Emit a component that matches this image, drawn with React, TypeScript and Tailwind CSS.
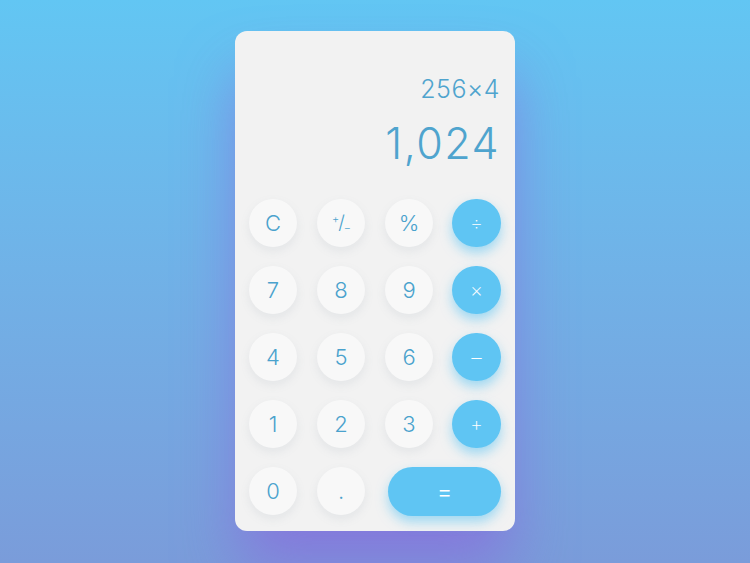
const keys: { label: string; kind: 'num' | 'op' | 'eq' }[] = [
  { label: 'C', kind: 'num' },
  { label: '⁺∕₋', kind: 'num' },
  { label: '%', kind: 'num' },
  { label: '÷', kind: 'op' },
  { label: '7', kind: 'num' },
  { label: '8', kind: 'num' },
  { label: '9', kind: 'num' },
  { label: '×', kind: 'op' },
  { label: '4', kind: 'num' },
  { label: '5', kind: 'num' },
  { label: '6', kind: 'num' },
  { label: '−', kind: 'op' },
  { label: '1', kind: 'num' },
  { label: '2', kind: 'num' },
  { label: '3', kind: 'num' },
  { label: '+', kind: 'op' },
  { label: '0', kind: 'num' },
  { label: '.', kind: 'num' },
  { label: '=', kind: 'eq' },
];

function Key({ label, kind }: { label: string; kind: 'num' | 'op' | 'eq' }) {
  if (kind === 'eq') {
    return (
      <button className="col-span-2 ml-[3px] h-[49px] rounded-full bg-[#5fc5f3] text-white text-[24px] font-light flex items-center justify-center shadow-[0_6px_12px_rgba(90,195,242,0.55)]">
        {label}
      </button>
    );
  }
  if (kind === 'op') {
    return (
      <button className="-ml-[1px] w-[49px] h-[48px] rounded-full bg-[#5fc5f3] text-white text-[20px] font-extralight flex items-center justify-center shadow-[0_6px_12px_rgba(90,195,242,0.55)]">
        {label === '−' ? <span className="text-[24px]">{label}</span> : label}
      </button>
    );
  }
  return (
    <button className="w-[48px] h-[48px] rounded-full bg-[#f8f8f8] text-[#4aa2cd] text-[22px] font-light flex items-center justify-center shadow-[0_4px_10px_rgba(120,140,160,0.12)]">
      {label === '⁺∕₋' ? (
        <span className="text-[19px] tracking-[-1px]">
          <sup className="text-[11px]">+</sup>/<sub className="text-[11px]">−</sub>
        </span>
      ) : (
        label
      )}
    </button>
  );
}

export default function App() {
  return (
    <div
      className="w-[750px] h-[563px] flex items-start justify-center pt-[31px] bg-gradient-to-b from-[#62c6f3] to-[#7a9cda] overflow-hidden"
      style={{ fontFamily: 'Inter, "Open Sans", sans-serif' }}
    >
      <div className="w-[280px] h-[500px] rounded-[12px] bg-[#f2f2f2] flex flex-col shadow-[0_40px_60px_-5px_rgba(140,100,220,0.65)]">
        {/* Display */}
        <div className="flex-1 flex flex-col items-end pr-[15px] pt-[43px] text-[#4fa4ce] font-light">
          <div className="text-[25px] leading-[30px] tracking-[0.5px]">256×4</div>
          <div className="mt-[13px] text-[43px] leading-[52px] tracking-[1.5px]">1,024</div>
        </div>

        {/* Keypad */}
        <div className="grid grid-cols-[48px_48px_48px_48px] gap-x-[20px] gap-y-[19px] px-[14px] pb-[15px]">
          {keys.map((k) => (
            <Key key={k.label} label={k.label} kind={k.kind} />
          ))}
        </div>
      </div>
    </div>
  );
}
